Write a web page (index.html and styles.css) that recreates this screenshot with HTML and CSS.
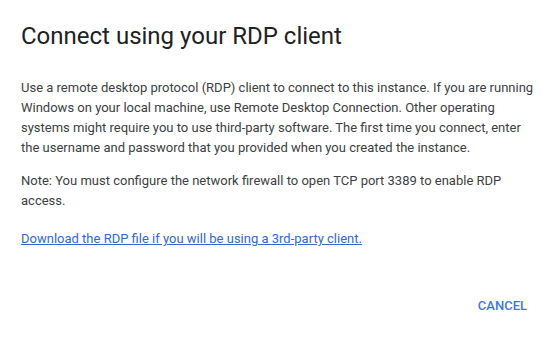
FILE: index.html
```html
<!DOCTYPE html>
<html lang="en">
  <head>
    <meta charset="UTF-8">
    <title>Connect using your RDP client</title>
    <link rel="stylesheet" href="styles.css">
  </head>
  <body>
    <div class="dialog">
      <h2>Connect using your RDP client</h2>
      <p class="intro">Use a remote desktop protocol (RDP) client to connect to this instance. If you are running Windows on your local machine, use Remote Desktop Connection. Other operating systems might require you to use third-party software. The first time you connect, enter the username and password that you provided when you created the instance.</p>
      <p class="note">Note: You must configure the network firewall to open TCP port 3389 to enable RDP access.</p>
      <p><a href="javascript:void(0)" class="download">Download the RDP file if you will be using a 3rd-party client.</a></p>
      <div class="actions">
        <button type="button" class="cancel">Cancel</button>
      </div>
    </div>
  </body>
</html>
```

FILE: styles.css
```css
body {
  margin: 0;
  background: white;
  font-family: Roboto, "Liberation Sans", sans-serif;
}

.dialog {
  padding: 20px 24px 0 21px;
}

.dialog h2 {
  margin: 0 0 26px;
  font-size: 24px;
  font-weight: 400;
  line-height: 32px;
  color: #202124;
}

.dialog p {
  margin: 0 -12px 0 0;
  font-size: 13px;
  line-height: 20px;
  color: #3c4043;
}

.dialog .intro {
  margin-bottom: 13px;
}

.dialog .note {
  margin-bottom: 18px;
}

.download {
  color: #3367d6;
  text-decoration: underline;
}

.actions {
  display: flex;
  justify-content: flex-end;
  margin-top: 41px;
  padding-right: 2px;
}

.cancel {
  background: none;
  border: none;
  padding: 8px 0;
  font-family: Roboto, "Liberation Sans", sans-serif;
  font-size: 13px;
  font-weight: 500;
  text-transform: uppercase;
  color: #3b78e7;
  cursor: pointer;
}
```
